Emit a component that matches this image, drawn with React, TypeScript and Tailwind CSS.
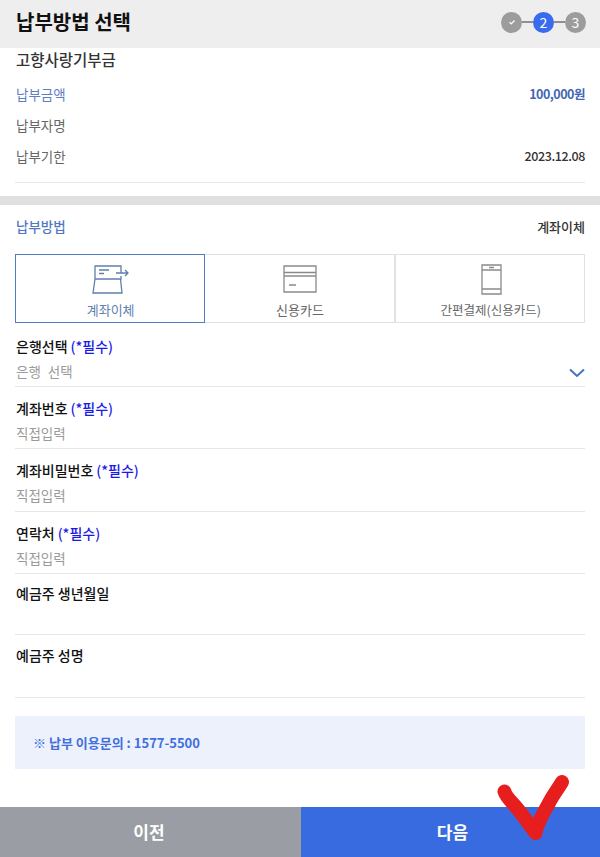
import React from "react";

const font = { fontFamily: '"Noto Sans CJK KR", "Noto Sans", sans-serif' };

function Field({ label, required, value, h = "h-[62px]", pt = "pt-[11px]" }: { label: string; required?: boolean; value?: string; h?: string; pt?: string }) {
  return (
    <div className={`${h} ${pt} border-b border-[#e6e6e6] flex flex-col pl-px`}>
      <div className="text-[14px] leading-[20px] font-medium text-[#111] flex items-center">
        <span>{label}</span>
        {required && <span className="ml-[3px] text-[#1a1ae6]">(*필수)</span>}
      </div>
      {value && <div className="mt-[5px] text-[13.500px] leading-[20px] text-[#9a9a9a] [word-spacing:4px]">{value}</div>}
    </div>
  );
}

function Tab({ label, active, icon, last, small }: { label: string; active?: boolean; icon: React.ReactNode; last?: boolean; small?: boolean }) {
  return (
    <div
      className={`flex-1 h-[69px] flex flex-col items-center pt-[8px] ${
        active ? "border border-[#4f7cc4] text-[#5f7fae]" : `border-y border-[#e2e2e2] text-[#666] ${last ? "border-x" : "border-r"}`
      }`}
    >
      <div className="h-[32px] flex items-center justify-center">{icon}</div>
      <div className={`mt-[6px] leading-[18px] ${small ? "text-[12.500px] pl-[2px]" : "text-[13px] pl-px"}`}>{label}</div>
    </div>
  );
}

export default function App() {
  return (
    <div className="w-[600px] h-[857px] relative bg-white overflow-hidden" style={font}>
      <header className="h-[48px] bg-[#eeeeee] flex items-center justify-between pl-[16px] pr-[14px] pb-[4px]">
        <h1 className="text-[20px] font-bold text-[#111] leading-[28px]">납부방법 선택</h1>
        <div className="flex items-center">
          <div className="w-[21px] h-[21px] rounded-full bg-[#9c9c9c] flex items-center justify-center">
            <svg width="8" height="8" viewBox="0 0 8 8" fill="none" stroke="#fff" strokeWidth="1.2">
              <path d="M1.500 4.200 3.200 6 6.500 2.500" />
            </svg>
          </div>
          <div className="w-[11px] h-[2px] bg-[#8f8f8f]" />
          <div className="w-[21px] h-[21px] rounded-full bg-[#386bee] text-white text-[14px] flex items-center justify-center">2</div>
          <div className="w-[11px] h-[2px] bg-[#8f8f8f]" />
          <div className="w-[21px] h-[21px] rounded-full bg-[#9c9c9c] text-white text-[14px] flex items-center justify-center">3</div>
        </div>
      </header>

      <section className="px-[15px] h-[148px]">
        <div className="h-[135px] border-b border-[#e6e6e6]">
          <div className="text-[15.500px] leading-[22px] font-medium text-[#333] pl-px">고향사랑기부금</div>
          <div className="mt-[9px] flex items-center justify-between h-[31px] pl-px">
            <span className="text-[13.500px] text-[#5e7fc4]">납부금액</span>
            <span className="text-[12.500px] font-bold text-[#4267b2] tracking-[-0.5px]">100,000원</span>
          </div>
          <div className="flex items-center justify-between h-[31px] pl-px">
            <span className="text-[13.500px] text-[#666]">납부자명</span>
          </div>
          <div className="flex items-center justify-between h-[31px] pl-px">
            <span className="text-[13.500px] text-[#666]">납부기한</span>
            <span className="text-[12.500px] font-medium text-[#333] tracking-[-0.4px]">2023.12.08</span>
          </div>
        </div>
      </section>

      <div className="h-[9px] bg-[#e0e0e0]" />

      <section className="px-[15px]">
        <div className="h-[49px] flex items-center justify-between pb-[6px] pl-px">
          <span className="text-[13.500px] font-medium text-[#4f78c4]">납부방법</span>
          <span className="text-[13px] font-medium text-[#333]">계좌이체</span>
        </div>

        <div className="flex">
          <Tab
            label="계좌이체"
            active
            icon={
              <svg className="ml-[2px]" width="38" height="30" viewBox="0 0 38 30" fill="none" stroke="#5f7fae" strokeWidth="1.3">
                <path d="M3 15V2h26v7M3 15h26v-3M3 15 1 29h29l-1.500-14" />
                <path d="M7 6h10M7 9.500h5M24 9h12M33 6l3 3-3 3" />
              </svg>
            }
          />
          <Tab
            label="신용카드"
            icon={
              <svg className="ml-[2px]" width="34" height="28" viewBox="0 0 34 28" fill="none" stroke="#8a8a8a" strokeWidth="1.3">
                <path d="M1 1h32v26H1zM1 7.500h32M1 11h32M6 20h7" />
              </svg>
            }
          />
          <Tab
            label="간편결제(신용카드)"
            last
            small
            icon={
              <svg className="ml-[4px]" width="21" height="31" viewBox="0 0 21 31" fill="none" stroke="#8a8a8a" strokeWidth="1.3">
                <path d="M1 1h19v29H1zM1 6h19M1 25h19M8 3.500h5" />
              </svg>
            }
          />
        </div>

        <div className="mt-[2px] relative">
          <Field label="은행선택" required value="은행 선택" />
          <svg className="absolute right-0 top-[43px]" width="16" height="10" viewBox="0 0 16 10" fill="none" stroke="#4472c4" strokeWidth="2">
            <path d="M1 1.500 8 8l7-6.500" />
          </svg>
          <Field label="계좌번호" required value="직접입력" />
          <Field label="계좌비밀번호" required value="직접입력" h="h-[63px]" />
          <Field label="연락처" required value="직접입력" />
          <Field label="예금주 생년월일" h="h-[61px]" pt="pt-[9px]" />
          <Field label="예금주 성명" h="h-[63px]" pt="pt-[10px]" />
        </div>

        <div className="mt-[18px] h-[53px] bg-[#edf1fc] flex items-center pl-[18px] text-[13px] font-bold text-[#3f6fe0]">
          ※ 납부 이용문의 : 1577-5500
        </div>
      </section>

      <footer className="absolute bottom-0 left-0 right-0 flex h-[50px] text-white text-[17px] font-bold">
        <button className="w-[301px] bg-[#9a9da4] pr-[3px]">이전</button>
        <button className="flex-1 bg-[#386bdf] pl-[4px]">다음</button>
      </footer>

      <svg className="absolute left-0 top-0 pointer-events-none" width="600" height="857" fill="none">
        <path d="M504.500 791.500C506 797 511 801 516 807 522 814 529 824 535.500 833 537 823 544 812 549 803 553 795 558 789 562 782" stroke="#e61e1e" strokeWidth="14" strokeLinecap="round" strokeLinejoin="round" />
      </svg>
    </div>
  );
}
